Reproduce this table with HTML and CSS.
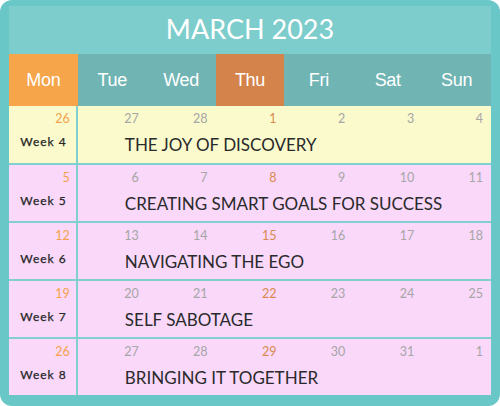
FILE: index.html
```html
<!DOCTYPE html>
<html>
<head>
<meta charset="utf-8">
<link rel="stylesheet" href="styles.css">
</head>
<body>
<div class="frame">
  <div class="title">MARCH 2023</div>
  <div class="days">
    <div class="day mon">Mon</div>
    <div class="day">Tue</div>
    <div class="day">Wed</div>
    <div class="day thu">Thu</div>
    <div class="day">Fri</div>
    <div class="day">Sat</div>
    <div class="day">Sun</div>
  </div>
  <div class="weeks">
    <div class="week yellow first">
      <div class="lead"><span class="num mon-n">26</span><span class="label">Week 4</span></div>
      <span class="num">27</span><span class="num">28</span><span class="num thu-n">1</span><span class="num">2</span><span class="num">3</span><span class="num">4</span>
      <div class="topic">THE JOY OF DISCOVERY</div>
    </div>
    <div class="week">
      <div class="lead"><span class="num mon-n">5</span><span class="label">Week 5</span></div>
      <span class="num">6</span><span class="num">7</span><span class="num thu-n">8</span><span class="num">9</span><span class="num">10</span><span class="num">11</span>
      <div class="topic">CREATING SMART GOALS FOR SUCCESS</div>
    </div>
    <div class="week">
      <div class="lead"><span class="num mon-n">12</span><span class="label">Week 6</span></div>
      <span class="num">13</span><span class="num">14</span><span class="num thu-n">15</span><span class="num">16</span><span class="num">17</span><span class="num">18</span>
      <div class="topic">NAVIGATING THE EGO</div>
    </div>
    <div class="week">
      <div class="lead"><span class="num mon-n">19</span><span class="label">Week 7</span></div>
      <span class="num">20</span><span class="num">21</span><span class="num thu-n">22</span><span class="num">23</span><span class="num">24</span><span class="num">25</span>
      <div class="topic">SELF SABOTAGE</div>
    </div>
    <div class="week">
      <div class="lead"><span class="num mon-n">26</span><span class="label">Week 8</span></div>
      <span class="num">27</span><span class="num">28</span><span class="num thu-n">29</span><span class="num">30</span><span class="num">31</span><span class="num">1</span>
      <div class="topic">BRINGING IT TOGETHER</div>
    </div>
  </div>
</div>
</body>
</html>
```

FILE: styles.css
```css
html, body {
  margin: 0;
  padding: 0;
  background: #ffffff;
}

.frame {
  width: 500px;
  height: 406px;
  box-sizing: border-box;
  background: #6ac7c8;
  border-radius: 12px;
  padding: 6px 9px 11px 9px;
  display: flex;
  flex-direction: column;
}

.title {
  height: 48px;
  background: #7ccdcc;
  color: #ffffff;
  font-family: Lato, "Noto Sans", sans-serif;
  font-size: 27px;
  display: flex;
  align-items: center;
  justify-content: center;
  padding-bottom: 4px;
  box-sizing: border-box;
}

.days {
  height: 52px;
  display: grid;
  grid-template-columns: repeat(7, 1fr);
  background: #70b5b3;
}

.day {
  display: flex;
  align-items: center;
  justify-content: center;
  color: #ffffff;
  font-family: "Liberation Sans", Arial, sans-serif;
  font-size: 18px;
  letter-spacing: -0.3px;
  padding-top: 1px;
}

.day.mon {
  background: #f6a54b;
}

.day.thu {
  background: #d4844b;
}

.weeks {
  display: flex;
  flex-direction: column;
  gap: 2px;
  background: #80d0d2;
}

.week {
  height: 56px;
  display: grid;
  grid-template-columns: repeat(7, 1fr);
  grid-template-rows: 20px 1fr;
  background: #f9d8fa;
  font-family: Lato, "Noto Sans", sans-serif;
}

.week.yellow {
  background: #fafacd;
}

.week.first {
  height: 57px;
}

.lead {
  grid-row: 1 / 3;
  border-right: 2px solid #80d0d2;
  display: flex;
  flex-direction: column;
  align-items: stretch;
}

.num {
  font-size: 12.5px;
  color: #a6a6a6;
  text-align: right;
  padding: 6px 8px 0 0;
  line-height: 14px;
}

.lead .num {
  padding-right: 6px;
}

.num.mon-n {
  color: #f4a24a;
}

.num.thu-n {
  color: #d98a4e;
}

.label {
  font-size: 12px;
  font-weight: 400;
  color: #262626;
  letter-spacing: 1px;
  text-align: center;
  padding-top: 8px;
  padding-left: 2px;
  -webkit-text-stroke: 0.25px #262626;
}

.topic {
  grid-column: 2 / 8;
  font-size: 17px;
  color: #2a2a2a;
  padding-left: 47px;
  padding-top: 8px;
}
```
